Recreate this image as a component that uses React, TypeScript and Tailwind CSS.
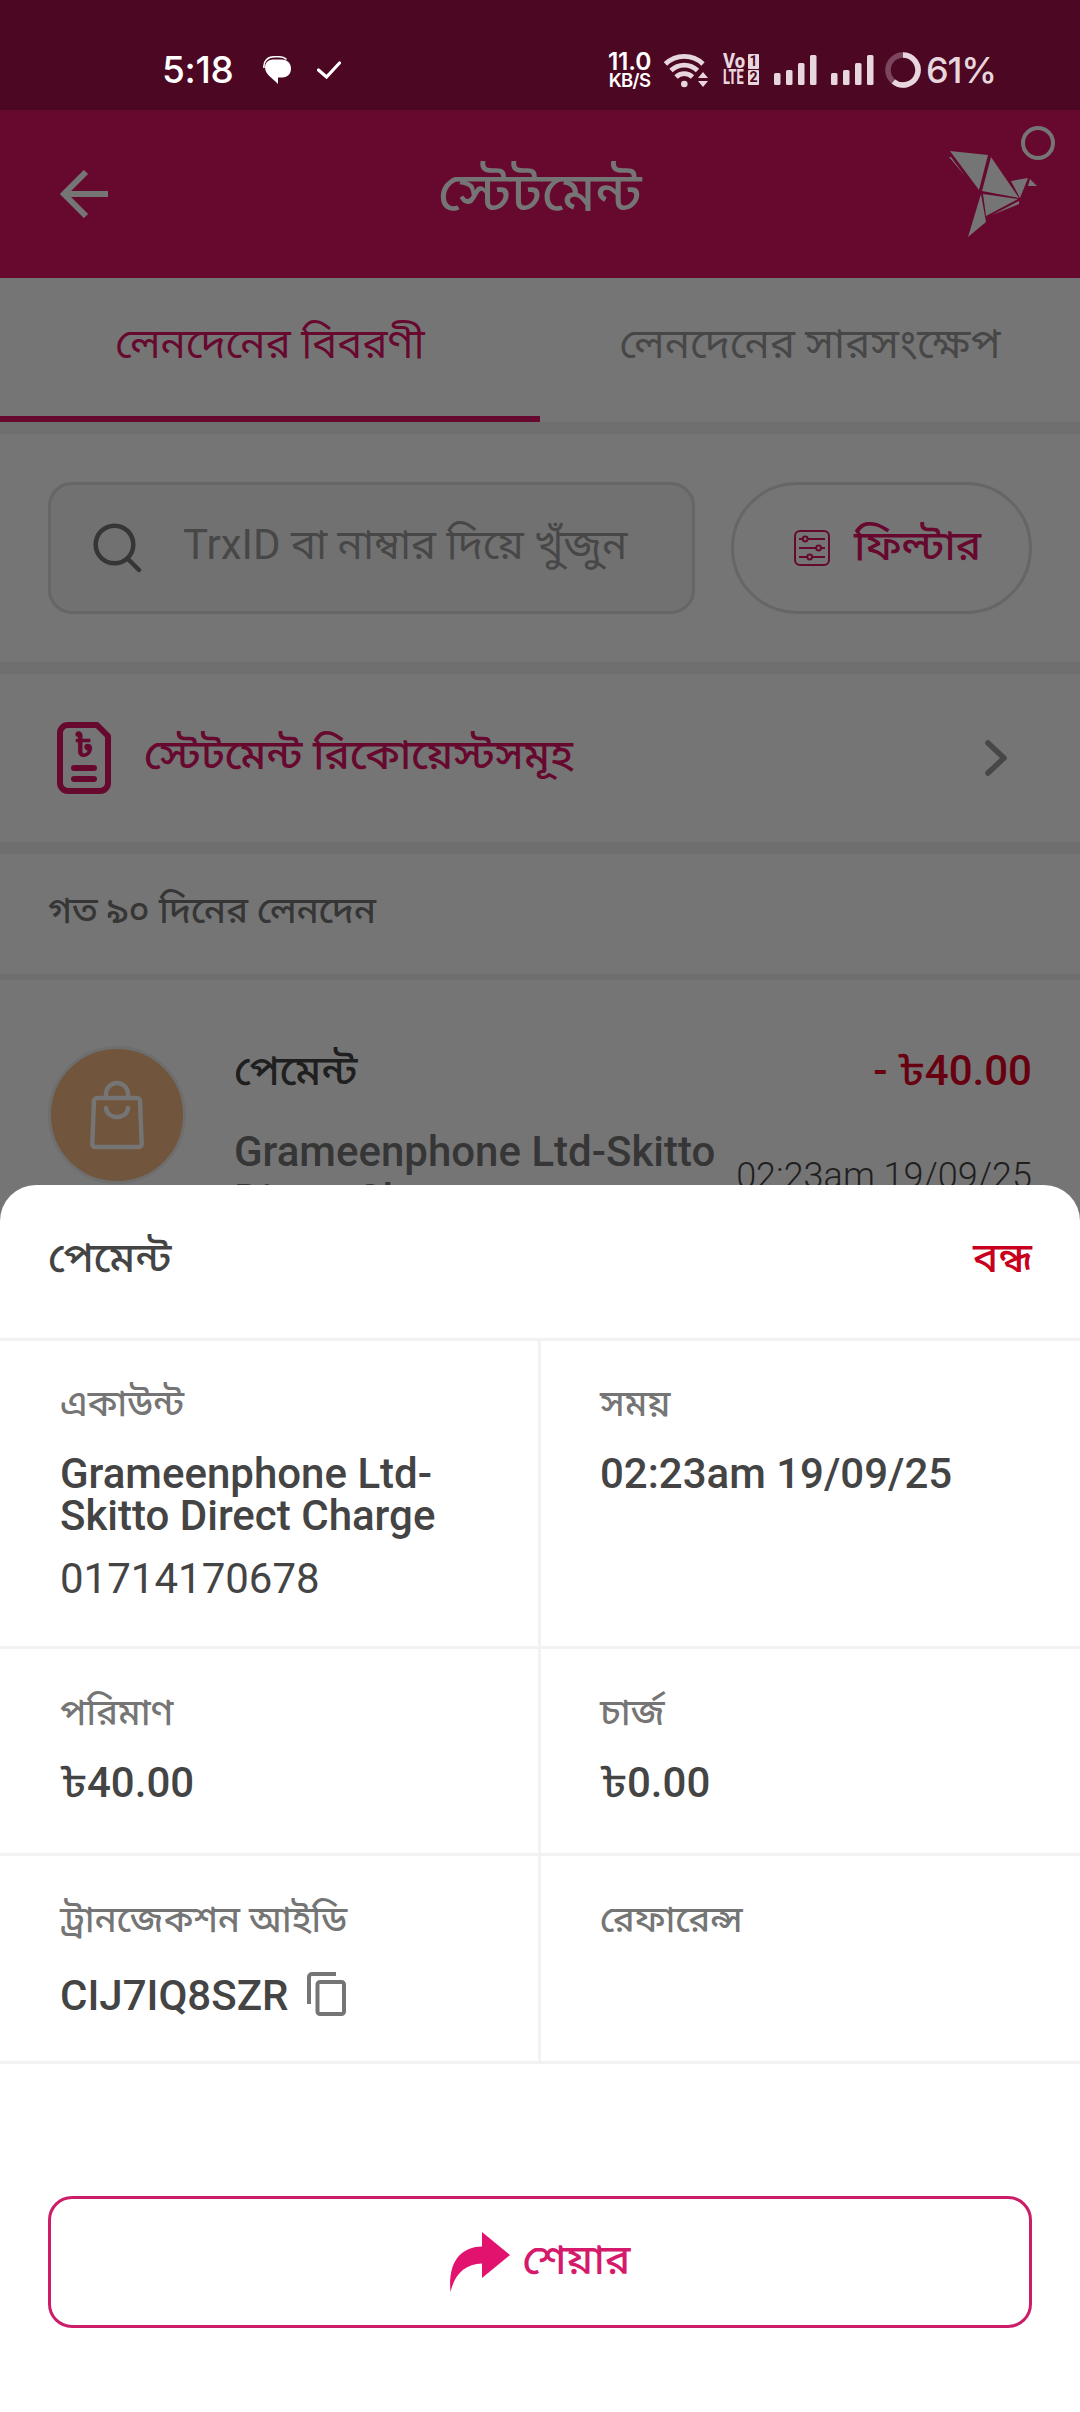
import type { ReactNode } from "react";

function Signal() {
  return (
    <svg className="h-[30px] w-[43px]" viewBox="0 0 43 30" fill="#e8d6de">
      <rect x="0" y="18" width="6.5" height="12" rx="1.5" />
      <rect x="12" y="15" width="6.5" height="15" rx="1.5" />
      <rect x="24" y="8" width="6.5" height="22" rx="1.5" />
      <rect x="36" y="0" width="6.5" height="30" rx="1.5" />
    </svg>
  );
}

function StatusBar() {
  return (
    <div className="flex h-[110px] items-center bg-[#4c0722] pt-[29px] pl-[162px] text-white">
      <span className="w-[101px] font-['Inter'] text-[37px] leading-[40px] font-medium tracking-[-0.3px]">5:18</span>
      <svg className="h-[28px] w-[28px]" viewBox="0 0 28 28">
        <path d="M1 12C0 5 5 .8 11 .8h5c3.500 0 6 1.200 7.500 2.700" fill="none" stroke="#fff" strokeWidth="1.600" />
        <path d="M10 3.500h9c5 0 9 3.500 9 9s-3.500 9-8.500 9H15V28C9 22 2 18 2 11.500 2 6.500 5.500 3.500 10 3.500z" fill="#fff" />
      </svg>
      <svg className="ml-[26px] h-[18px] w-[24px]" viewBox="0 0 24 18">
        <path d="M1.500 9l8 7L22.500 2" fill="none" stroke="#fff" strokeWidth="3.200" strokeLinecap="round" />
      </svg>
      <div className="ml-[266px] flex w-[45px] flex-col items-center font-['Inter']">
        <span className="text-[24.500px] leading-[21px] font-semibold tracking-[-0.2px]">11.0</span>
        <span className="text-[18.500px] leading-[17px] font-semibold tracking-[-0.7px]">KB/S</span>
      </div>
      <svg className="ml-[12px] h-[36px] w-[46px]" viewBox="0 0 46 36">
        <g fill="none" stroke="#e8d6de" strokeWidth="4.800">
          <path d="M1.500 12a27 27 0 0 1 37.500 0" />
          <path d="M7 18.500a19 19 0 0 1 26.500 0" />
          <path d="M12 25a12 12 0 0 1 16.500 0" />
        </g>
        <circle cx="20.300" cy="32" r="3.300" fill="#e8d6de" />
        <path d="M34 26l5-6 5 6zM34 29l5 6 5-6z" fill="#e8d6de" />
      </svg>
      <div className="ml-[13px] grid w-[37px] grid-cols-[25px_11px] gap-y-[1px] font-['Roboto'] text-[#e8d6de]">
        <span className="h-[15px] w-[25px] origin-left scale-x-[0.92] text-[20px] leading-[15px] font-extrabold">Vo</span>
        <span className="h-[15px] rounded-[1px] bg-[#e8d6de] text-center text-[14px] leading-[15px] font-bold text-[#4c0722]">1</span>
        <span className="h-[15px] w-[25px] origin-left scale-x-[0.64] text-[20px] leading-[15px] font-extrabold">LTE</span>
        <span className="h-[15px] rounded-[1px] bg-[#e8d6de] text-center text-[14px] leading-[15px] font-bold text-[#4c0722]">2</span>
      </div>
      <div className="ml-[14px] flex gap-[14px]">
        <Signal />
        <Signal />
      </div>
      <svg className="ml-[11px] h-[36px] w-[36px]" viewBox="0 0 36 36" fill="none" strokeWidth="5.500">
        <circle cx="18" cy="18" r="15" stroke="#7d4660" />
        <path d="M18 3a15 15 0 1 1-9.600 26.500" stroke="#e8d6de" />
      </svg>
      <span className="ml-[5px] font-['Inter'] text-[36px] leading-[40px] font-medium tracking-[-1.200px] text-[#e8d6de]">61%</span>
    </div>
  );
}

function Header() {
  return (
    <header className="relative flex h-[168px] items-center justify-center bg-[#67082f]">
      <svg className="absolute top-[60px] left-[60px] h-[48px] w-[48px]" viewBox="0 0 48 48" fill="none" stroke="#757575" strokeWidth="6">
        <path d="M48 24H6M26 2L4 24l22 22" />
      </svg>
      <h1 className="pb-[2px] text-[54px] leading-[60px] font-medium text-[#757575]">স্টেটমেন্ট</h1>
      <svg className="absolute top-[14px] right-[20px] h-[120px] w-[114px]" viewBox="946 124 114 120">
        <g fill="#757575">
          <path d="M950 151l38 4-9 35zM949 157l2 0 14 19zM991 157l28 41-37-7zM981 194l-13 43 18-15zM983 194l35 5-32 17zM1019 201v3l-27 11zM1011 181l17-3-8 20zM1030 179l7 7h-9z" />
        </g>
        <circle cx="1038" cy="143" r="15" fill="none" stroke="#757575" strokeWidth="4" />
      </svg>
    </header>
  );
}

function Cell({ label, tall, children, right }: { label: string; tall?: boolean; children?: ReactNode; right?: boolean }) {
  return (
    <div
      className={`${tall ? "pt-[39px]" : "pt-[40px]"} ${right ? "pl-[59px]" : "w-[541px] border-r-[3px] border-[#f2f2f2] pl-[60px]"}`}
    >
      <div className="text-[36px] leading-[48px] font-medium text-[#757575]">{label}</div>
      {children}
    </div>
  );
}

function CopyIcon() {
  return (
    <svg className="h-[44px] w-[39px] -translate-y-[2px]" viewBox="0 0 39 44" fill="none" stroke="#757575" strokeWidth="4">
      <path d="M29 2H5a3 3 0 0 0-3 3v27" />
      <rect x="10.500" y="10" width="26.500" height="32" rx="2.500" />
    </svg>
  );
}

function Sheet() {
  return (
    <section className="absolute inset-x-0 top-[1185px] bottom-0 rounded-t-[36px] bg-white text-[#444444]">
      <div className="flex h-[156px] justify-between border-b-[3px] border-[#f2f2f2] px-[48px] pt-[49px] text-[42px] leading-[48px] font-medium">
        <span>পেমেন্ট</span>
        <span className="text-[#c8001e]">বন্ধ</span>
      </div>
      <div className="flex h-[308px] border-b-[3px] border-[#f2f2f2]">
        <Cell label="একাউন্ট" tall>
          <div className="mt-[25px] text-[42px] leading-[42px] font-medium">
            Grameenphone Ltd-
            <br />
            Skitto Direct Charge
          </div>
          <div className="mt-[21px] text-[42px] leading-[42px]">01714170678</div>
        </Cell>
        <Cell label="সময়" tall right>
          <div className="mt-[25px] text-[42px] leading-[42px] font-medium">02:23am 19/09/25</div>
        </Cell>
      </div>
      <div className="flex h-[207px] border-b-[3px] border-[#f2f2f2]">
        <Cell label="পরিমাণ">
          <div className="mt-[25px] text-[42px] leading-[42px] font-medium">৳40.00</div>
        </Cell>
        <Cell label="চার্জ" right>
          <div className="mt-[25px] text-[42px] leading-[42px] font-medium">৳0.00</div>
        </Cell>
      </div>
      <div className="flex h-[208px] border-b-[3px] border-[#f2f2f2]">
        <Cell label="ট্রানজেকশন আইডি">
          <div className="mt-[30px] flex items-center gap-[19px] text-[42px] leading-[42px] font-medium">
            CIJ7IQ8SZR
            <CopyIcon />
          </div>
        </Cell>
        <Cell label="রেফারেন্স" right />
      </div>
      <button className="mx-[48px] mt-[132px] flex h-[132px] w-[984px] items-center justify-center rounded-[24px] border-[3px] border-[#cc1d68] text-[42px] leading-[48px] font-medium text-[#d61a6b]">
        <svg className="mr-[13px] h-[60px] w-[60px]" viewBox="0 0 60 60">
          <path d="M32 0l28 23-28 23V31.500C16 32 5 41 .5 60 -2 33 8 15 32 14.500z" fill="#e2136e" />
        </svg>
        <span className="pb-[4px]">শেয়ার</span>
      </button>
    </section>
  );
}

export default function App() {
  return (
    <div className="relative h-[2412px] w-[1080px] overflow-hidden bg-[#757575] font-['Roboto','Noto_Sans_Bengali_UI','Noto_Sans_Bengali',sans-serif]">
      <StatusBar />
      <Header />
      <nav className="flex h-[156px] border-b-[12px] border-[#6f6f6f] text-center text-[42px] leading-[48px]">
        <div className="h-[144px] w-[540px] border-b-[6px] border-[#67082f] pt-[42px] text-[#67082f]">লেনদেনের বিবরণী</div>
        <div className="w-[540px] pt-[42px] text-[#474747]">লেনদেনের সারসংক্ষেপ</div>
      </nav>
      <div className="flex h-[240px] gap-[36px] border-b-[12px] border-[#6f6f6f] px-[48px] pt-[48px] text-[42px] leading-[48px]">
        <div className="flex h-[132px] w-[647px] items-center rounded-[24px] border-[3px] border-[#666666] bg-[#717171] pl-[42px] text-[#474747]">
          <svg className="h-[50px] w-[49px]" viewBox="0 0 49 50" fill="none" stroke="#363636" strokeWidth="4.500" strokeLinecap="round">
            <circle cx="21.500" cy="21.500" r="18.800" />
            <path d="M35 36l11 11" />
          </svg>
          <span className="ml-[41px] pb-[6px]">TrxID বা নাম্বার দিয়ে খুঁজুন</span>
        </div>
        <div className="flex h-[132px] w-[301px] items-center rounded-full border-[3px] border-[#666666] pl-[60px] font-medium text-[#67082f]">
          <svg className="h-[36px] w-[36px]" viewBox="0 0 36 36" fill="none" stroke="#67082f" strokeWidth="2">
            <rect x="1" y="1" width="34" height="34" rx="5" />
            <path d="M5 9h4M13.500 9H31M5 18h17M27 18h4M5 27h8.500M18 27h13" />
            <circle cx="11.200" cy="9" r="2.400" />
            <circle cx="24.600" cy="18" r="2.400" />
            <circle cx="15.700" cy="27" r="2.400" />
          </svg>
          <span className="ml-[24px] pb-[5px]">ফিল্টার</span>
        </div>
      </div>
      <div className="flex h-[180px] items-center border-b-[12px] border-[#6f6f6f] pr-[72px] pl-[57px] text-[42px] leading-[48px] font-medium text-[#67082f]">
        <div className="relative h-[72px] w-[54px]">
          <svg className="h-[72px] w-[54px]" viewBox="0 0 54 72" fill="none" stroke="#67082f" strokeWidth="6" strokeLinecap="round" strokeLinejoin="round">
            <path d="M11 3h29l11 11v47a8 8 0 0 1-8 8H11a8 8 0 0 1-8-8V11a8 8 0 0 1 8-8z" />
            <path d="M17 46h20M17 57h20" />
          </svg>
          <span className="absolute inset-x-0 top-[13px] text-center font-['Noto_Sans_Bengali'] text-[32px] leading-[28px] font-bold">৳</span>
        </div>
        <span className="ml-[33px] pb-[6px]">স্টেটমেন্ট রিকোয়েস্টসমূহ</span>
        <svg className="ml-auto h-[36px] w-[24px]" viewBox="0 0 24 36" fill="none" stroke="#474747" strokeWidth="5.500" strokeLinecap="round" strokeLinejoin="round">
          <path d="M4 3l16 15L4 33" />
        </svg>
      </div>
      <div className="h-[126px] border-b-[6px] border-[#6f6f6f] pt-[33px] pl-[48px] text-[36px] leading-[48px] font-medium text-[#363636]">
        গত ৯০ দিনের লেনদেন
      </div>
      <div className="flex px-[48px] pt-[66px]">
        <div className="flex h-[138px] w-[138px] items-center justify-center rounded-full border-[3px] border-[#6e6e6e] bg-[#71553c]">
          <svg className="h-[70px] w-[54px]" viewBox="0 0 54 70" fill="none" stroke="#757575" strokeWidth="4.500" strokeLinecap="round" strokeLinejoin="round">
            <path d="M7 18h40a3 3 0 0 1 3 3l1.700 43a3 3 0 0 1-3 3H5.300a3 3 0 0 1-3-3L4 21a3 3 0 0 1 3-3z" />
            <path d="M16 18v-4a11 11 0 0 1 22 0v4M16 28c1 12 21 12 22 0" />
          </svg>
        </div>
        <div className="ml-[48px] w-[485px]">
          <div className="pt-[1px] text-[42px] leading-[48px] font-medium text-[#1f1f1f]">পেমেন্ট</div>
          <div className="mt-[33px] text-[42px] leading-[48px] font-medium text-[#363636]">Grameenphone Ltd-Skitto Direct Charge</div>
        </div>
        <div className="flex-1 text-right whitespace-nowrap">
          <div className="pt-[1px] text-[42px] leading-[48px] font-medium text-[#67000f]">- ৳40.00</div>
          <div className="mt-[57px] text-[36px] leading-[48px] font-light text-[#1f1f1f]">02:23am 19/09/25</div>
        </div>
      </div>
      <Sheet />
    </div>
  );
}
